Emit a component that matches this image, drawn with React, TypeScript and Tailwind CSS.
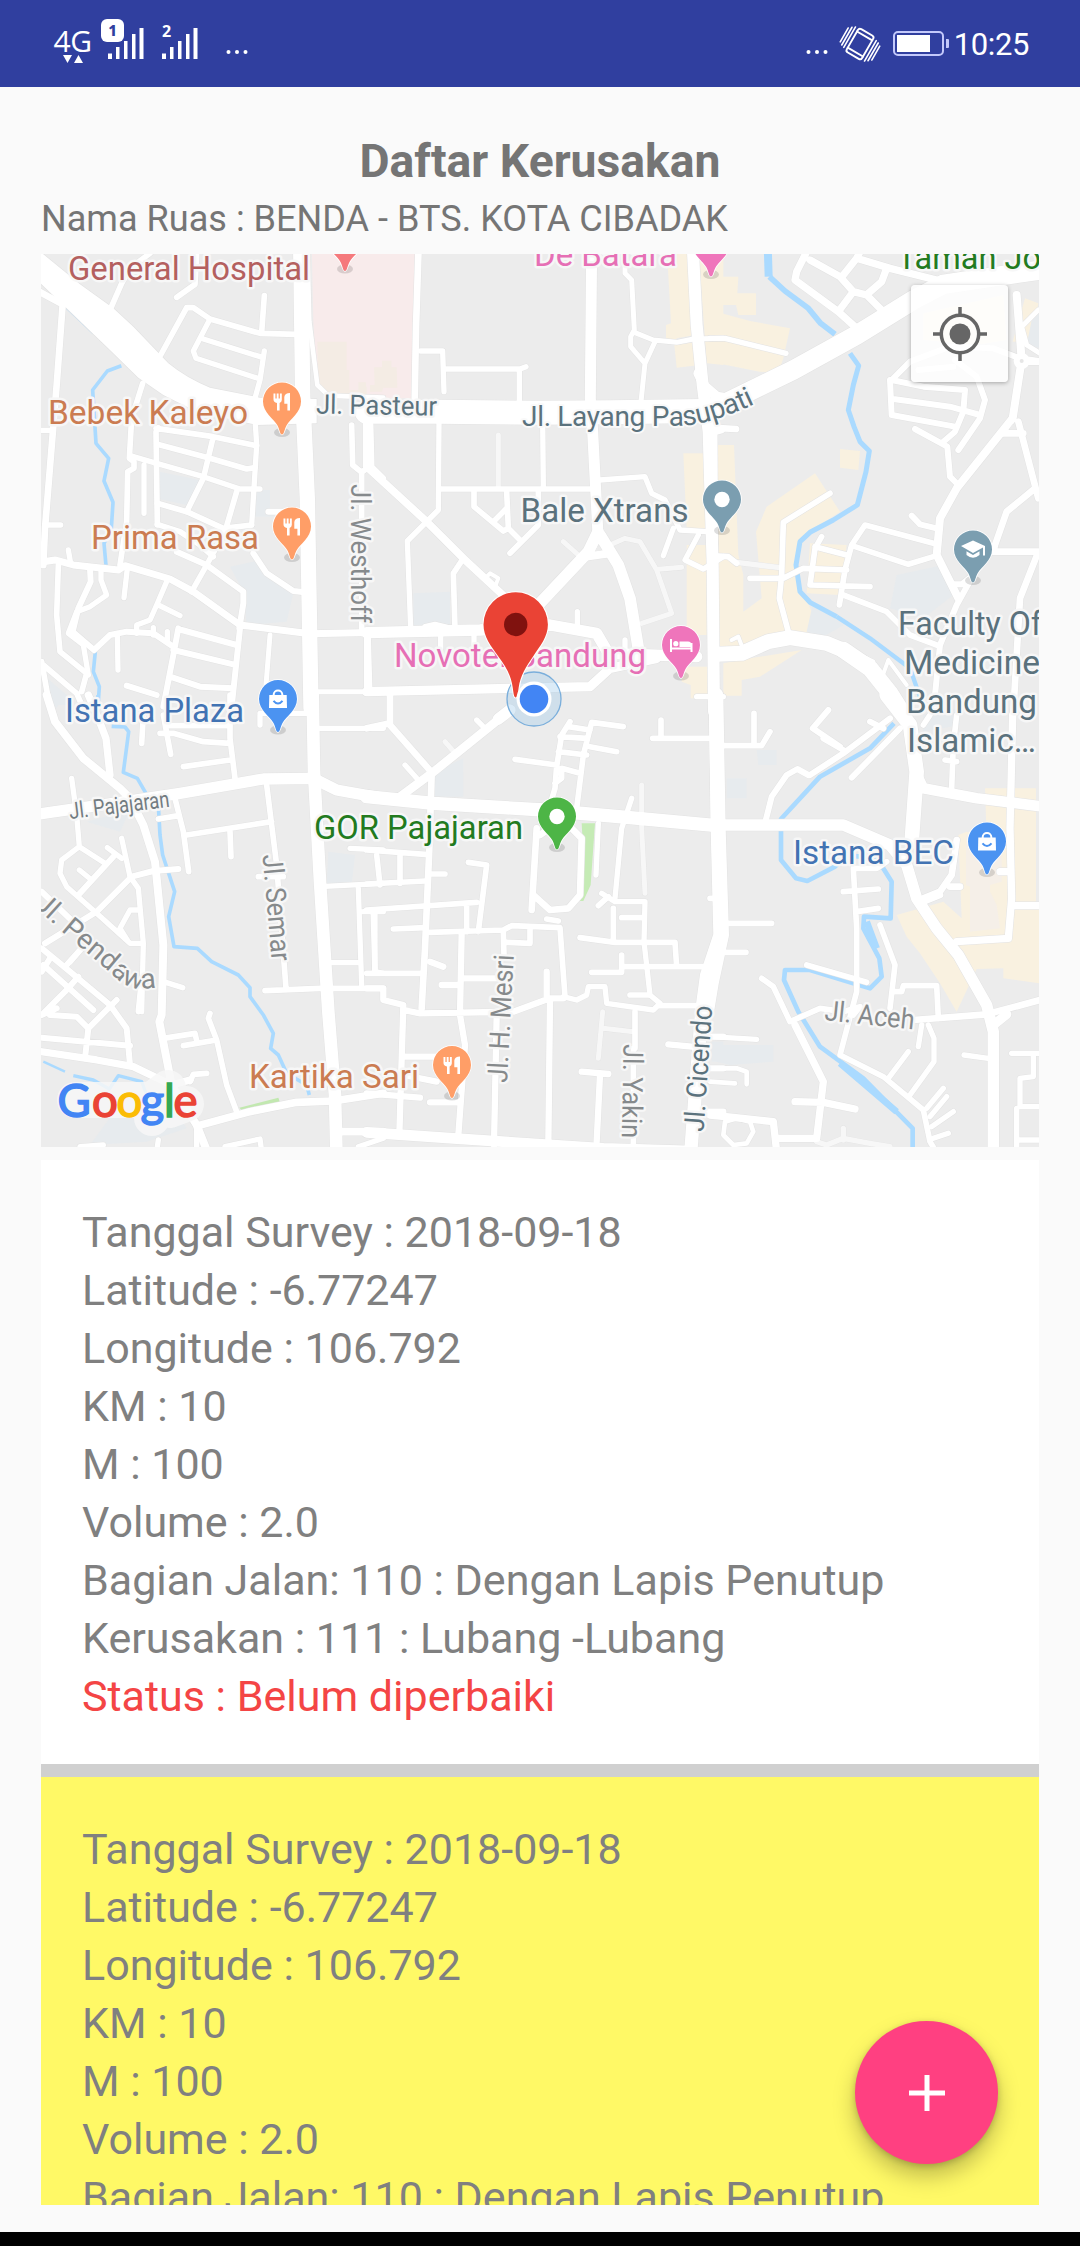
import React from "react";

type Road = [number, string];
type Tile = {
  x: number;
  y: number;
  areas: [string, string][];
  water: Road[];
  roads: Road[];
  faint?: Road[];
};

const SAND = "#f9f1e0";
const PALE = "#e7ebee";
const PINK = "#f8ebeb";

// Map geometry, split in tiles whose units are a third of a pixel.
const TILES: Tile[] = [
  {
    x: 30,
    y: 245,
    areas: [
      [PINK, "M845 0H1060V460H900L862 420L850 230Z"],
      ["#f4ece4", "M862 290H950V375H958V435H985V412H1008V425H1035V368H1060V450H900L864 415Z"],
      [PALE, "M388 680L510 705L470 780L388 762Z"],
      [PALE, "M600 965L690 945L740 1010L790 1045L770 1130L650 1140L640 1040Z"],
      [PALE, "M680 735H720V790L735 815H668Z"],
      [PALE, "M40 1290L110 1350L130 1380H50Z"],
    ],
    water: [
      [5, "M108 188L190 266"],
      [11, "M274 362L232 378L188 435L198 595L236 640L222 708L249 772L244 850L222 895L228 962"],
      [11, "M196 1220L190 1280L208 1325L204 1385"],
    ],
    roads: [
      [46, "M812 0L818 450L832 760L843 1390"],
      [14, "M832 0L838 230L862 420L895 452L1060 458"],
      [20, "M0 125L98 178L80 420L45 850L40 960"],
      [16, "M30 556H60M45 840H92M115 915L122 955"],
      [17, "M240 195L275 115L300 70L360 25"],
      [17, "M440 157L495 118L500 25"],
      [17, "M392 330L470 188L490 188L540 222L690 265L800 268M703 152L695 262"],
      [16, "M540 222L490 318L498 340L690 402M520 282L690 335M703 318L690 405L672 470L680 600L665 840"],
      [17, "M338 415L305 520L298 640L312 650L312 670L293 680L290 830L270 960"],
      [16, "M300 632L380 655L520 695L630 732H690M342 660V805"],
      [17, "M385 548L378 560L382 840M378 550L550 575L680 602M382 598L540 640L650 672L675 668M550 575L520 700L470 800"],
      [17, "M382 775L470 800L580 850L665 840M382 838L450 860L510 900L550 935M620 740L585 860L530 960L485 1040"],
      [18, "M440 920L530 960L640 1040L640 1075L628 1150M670 925L710 985L790 1038L825 1042M715 800H760"],
      [21, "M40 950L75 945L130 960L265 975L285 962L420 1002L490 1040L630 1140L840 1166L1060 1162"],
      [17, "M85 960L80 1110L90 1220L170 1285L155 1340M40 1260L140 1345L160 1390M35 1250L60 1390"],
      [18, "M180 970L182 1010L145 1090L128 1160L192 1215L240 1170L290 1160L370 1165L430 1205"],
      [16, "M213 970V1005L230 1050L180 1085L140 1100L115 1165L160 1200L175 1290"],
      [16, "M292 970L282 1058M410 1010L380 1080L360 1125L320 1140V1165M385 1080L450 1112M262 1165L264 1275M370 1148V1170M412 1160V1185"],
      [18, "M445 1150L430 1230L400 1385M455 1155L620 1200M430 1215L610 1258M420 1295L510 1325L610 1330M630 1150L605 1385M290 1322L380 1350"],
      [15, "M720 1170L708 1320M1015 1165L1020 1340M865 1340H1060"],
      [17, "M965 540L968 660L995 682L1025 660L1022 540M995 680V1165M1025 665L1060 700"],
    ],
  },
  {
    x: 370,
    y: 245,
    areas: [
      [PINK, "M-10 0H140L128 460H-10Z"],
      ["#f4ece4", "M12 367H36V347H64V367H80L82 428H40L36 440H0V420H14Z"],
      [SAND, "M890 0H960L975 270L920 280L915 300L985 290L990 360L920 368L912 290L888 280V240L903 235Z"],
      [SAND, "M985 0H1060V360L1010 355Z"],
      [SAND, "M940 625H1000L1010 860L950 850Z"],
      [SAND, "M1035 600H1060V930H1040Z"],
      [SAND, "M950 900H1010V1170H950Z"],
      [PALE, "M130 1045L240 1040V1145L130 1150Z"],
      [SAND, "M935 1265H1015V1360H962V1320L935 1310Z"],
    ],
    water: [],
    roads: [
      [72, "M-10 500H200L500 503L720 502L1000 498"],
      [20, "M146 0L138 250L134 470"],
      [33, "M665 0L661 460L668 560L684 870"],
      [36, "M968 0L980 240L998 420L1016 560L1020 700L1028 960L1032 1400"],
      [15, "M765 60V85L785 105L793 255L782 275V305L825 355L812 480M793 262L850 285L920 292L970 282L1060 280M855 290L825 355"],
      [16, "M152 318H218L222 440M230 372H450L468 365M448 372V470"],
      [16, "M518 520L520 730M207 535L205 795L112 888L122 1150M215 732H660"],
      [17, "M312 740V785L400 858L415 850L410 740M370 830L410 790M415 850L450 885M420 925L505 840V740"],
      [23, "M-10 530V665L170 830L280 940L420 1070"],
      [17, "M280 940L250 985L255 1150"],
      [12, "M345 1000L360 985L385 1000L375 1025"],
      [35, "M684 860L655 920L500 1085M690 870L745 960L780 1060L805 1210"],
      [24, "M650 935L720 925"],
      [16, "M690 705L825 695L845 745L885 765L930 855L1010 860M910 850L880 932M985 870L945 945L1000 972L1060 935"],
      [34, "M-10 1163L330 1155L540 1140L680 1165L715 1225L980 1235"],
      [16, "M165 1145L195 1138L235 1148M212 1175V1210M312 1170V1200M622 1100V1140M765 1185V1210"],
      [28, "M-10 1340L420 1330L660 1325L720 1270L860 1240"],
      [16, "M60 1345V1400M980 1355H1060M-10 1180V1345"],
      [30, "M985 385L1005 425L1040 455L1060 458"],
    ],
    faint: [
      [15, "M385 570V725M580 890L625 930M720 900L765 880L810 890L860 975L905 1105L815 1135M865 973L935 967"],
    ],
  },
  {
    x: 710,
    y: 245,
    areas: [
      [SAND, "M0 95H85L82 145H138V210H85L78 180H35V205L120 228L240 250L220 340L205 385L150 380L0 350Z"],
      [SAND, "M15 600H72L85 930L100 990V1100L155 1060L138 860L170 785L315 685L390 800L290 865L260 940L270 1020L310 1110L300 1165L100 1210L28 1210Z"],
      [SAND, "M390 612L450 618L445 675L390 668Z"],
      [SAND, "M300 895L410 900L390 1050L290 1045Z"],
      [SAND, "M40 1255L120 1240L275 1215L150 1295L95 1305V1352H40Z"],
      [SAND, "M640 205L880 150L890 285L800 300L700 290L640 285Z"],
      [SAND, "M945 160L985 175L965 290H908Z"],
      [PALE, "M970 200H990V310L950 300Z"],
      [PALE, "M560 990L700 960L730 1050L640 1120L540 1090Z"],
      [PALE, "M310 1070L420 1130L330 1180L290 1160Z"],
    ],
    water: [
      [24, "M173 0L176 95"],
      [17, "M178 95L225 138L295 190L332 235L375 268"],
      [15, "M420 325L446 362L430 420L415 495L432 545L450 590L478 618L468 680L442 780L370 825L300 862L270 890L258 960L270 1040L300 1072L380 1115"],
      [13, "M380 1115L480 1180L600 1270L640 1385"],
    ],
    roads: [
      [58, "M0 490L35 480L250 375L440 270L610 165L700 118L820 100L1060 65"],
      [20, "M35 555L18 560M0 548L78 552"],
      [22, "M435 245L385 200L255 105L260 80L300 0M385 200L430 140L470 150L515 195M300 45L390 95L430 140M400 90L440 40L450 20M440 40L540 70L680 105M530 70L515 110L475 145"],
      [16, "M0 280L45 280L228 325"],
      [17, "M360 745L220 832L215 990L208 1060L235 1160M120 1000H220L280 970L410 975M335 875L315 910L300 1020L480 1025M315 905L410 930M388 1080L405 975L425 900L465 840L670 895M435 905L595 958L670 935M400 1050L530 1100L600 1170L680 1200"],
      [17, "M0 932L55 935L80 955"],
      [45, "M20 1228L95 1225L175 1190L240 1178L350 1195L410 1220"],
      [50, "M400 1215L480 1270L540 1345L575 1400"],
      [12, "M65 1185L85 1175L100 1215M450 1230L490 1250M515 1300L535 1245L590 1320"],
      [18, "M545 405L600 350L720 305L850 310L930 340L1000 350M540 405L545 510L735 545M545 405L640 425L765 435L760 500L735 560L700 590M550 462L720 485L810 510M615 552L712 605L720 695L745 720M735 345L800 395L825 465L810 520L745 615M625 375L730 365"],
      [24, "M920 150L935 345L908 520L740 730L690 820L680 930L745 1060"],
      [20, "M935 350H1000M925 530L985 760M875 565H940M975 730L890 800L855 900L850 920H1000M985 920L930 1060L910 1400"],
      [18, "M605 812L630 838L680 850M725 1018H755L790 990L740 1080L690 1200L670 1400"],
      [15, "M985 195L935 245L950 300L990 325"],
      [17, "M14 570L18 1380"],
    ],
    faint: [[16, "M80 952L210 968"]],
  },
  {
    x: 30,
    y: 695,
    areas: [
      ["#c2e8b0", "M628 1238L745 1208L750 1222L635 1246Z"],
      [PALE, "M35 0H100L80 40ZM170 380L300 345L270 410Z"],
      [PALE, "M895 470L975 480L965 570H890Z"],
      [PALE, "M290 1200L420 1220L470 1300L350 1340L180 1350Z"],
    ],
    water: [
      [11, "M204 0L205 35M245 94L285 96L296 110L280 232L322 250L348 295L385 330L390 420L398 480L434 590L416 665L432 755L502 760L545 800L625 840L660 878V905L700 960L730 1015L722 1060L745 1080L770 1135L830 1170L838 1200"],
      [7, "M40 1100L105 1130"],
      [10, "M130 1142L190 1155L238 1182L265 1142L335 1160L350 1200L375 1225"],
    ],
    roads: [
      [34, "M0 362L60 352L250 325L450 295L700 252L850 250L920 285L1060 310"],
      [38, "M848 0L852 230L870 560L895 950L915 1200L920 1400"],
      [24, "M50 0L75 80L160 190L270 280L300 310L340 390L375 500L400 750L395 960L388 980L425 1170L500 1290L540 1390"],
      [22, "M175 0L205 70L228 130L240 240"],
      [16, "M125 250L140 360L148 455L95 495L90 535L110 575L200 655L300 745H335M335 950L340 745L325 580L300 545L275 430M148 455L225 505M232 458L275 490M148 525L185 555M325 645H300L270 700L295 740"],
      [18, "M145 600L250 485M120 800L155 760L110 810M45 745L200 650L305 545L370 528L445 522M35 590L150 700"],
      [18, "M35 760L120 830L240 930L290 1000L300 1110M35 830L60 790M40 810L190 945M35 960L105 890L145 845M35 960L80 940M60 960L140 965L175 1000L165 1090M175 1000L260 915M35 1028L300 1052"],
      [22, "M0 1065L200 1095L310 1115L425 1170L480 1155"],
      [17, "M325 950L335 850M400 860L458 878M340 60L335 145M400 60L422 178M390 115L430 115L520 140L600 145M460 215L600 195M410 92H600M600 0V130L615 250M385 372L445 362M435 310L460 410L476 530M470 420L725 380M600 410L603 485M710 270L740 510L768 880M685 545H760M705 887L870 880L1060 880"],
      [17, "M400 1030L495 1015L502 1045M460 1052L560 1035M540 955L535 970L560 1035L590 1170L620 1250M480 1160L490 1138L530 1135"],
      [23, "M505 1292L660 1250L800 1222L910 1218L1060 1195M935 1310H1060"],
      [16, "M500 1290V1400M690 60V90M690 55H840M870 100H1060M870 575L1060 565M985 580L995 870M900 803H985M1000 650H1060M1035 660V830L1060 835M960 460L1060 465M150 1355L220 1350M385 1335L380 1370M585 1355L690 1332L695 1370M985 1355L1060 1330"],
    ],
  },
  {
    x: 370,
    y: 695,
    areas: [
      [PALE, "M195 230L280 190V305H195Z"],
      ["#c5ebb5", "M635 385H675L662 570L640 618H625L638 440Z"],
      [PALE, "M1025 1040H1060V1100H1025Z"],
    ],
    water: [],
    roads: [
      [40, "M-10 305L190 325L520 345L780 368L1040 392"],
      [40, "M1036 0L1042 400L1050 720L1010 840L995 950L960 1400"],
      [26, "M90 305L185 235L400 62"],
      [34, "M385 72L420 45"],
      [20, "M60 0V90L185 232M185 235L178 460L165 760L155 940M-10 100L60 85"],
      [16, "M320 75L345 100M105 210L145 255"],
      [17, "M435 193L560 210L555 280L540 330M560 215L575 120L600 80M555 265L575 250V220L630 235M570 125L650 130M565 170L650 180M595 95L660 105M620 340L640 180L665 82L760 95M660 155L740 170"],
      [20, "M500 400L485 645M490 600L540 645L595 640L630 600L635 430L600 395M510 420L560 385"],
      [16, "M685 385L678 540M785 310L755 400L735 610M695 595L735 620H825L822 740L840 900L870 925L850 945L710 925L705 875H655L650 900L620 915L580 905"],
      [17, "M685 632L715 605M730 640V740M630 728L735 742H915L920 815M755 668H820M665 832H755V780M755 815L1005 815M780 900H835M870 932H1000M795 950V1060M790 1060V1400M848 130H1040M873 75V125M1020 610H1060"],
      [17, "M-10 465L165 478M20 480L30 570M90 480V565M-10 567L165 558M180 537H225M295 502L350 510L325 710M-10 645L320 622M70 702L165 698M180 712L400 705L425 692L570 698L585 905M530 672L565 678M10 655L15 830M-10 835H155M290 625V710M400 710L402 780M480 700V745L410 742"],
      [19, "M275 715L270 960L285 1050L265 1320M180 800L220 815M215 870H265M275 850H380M-10 880H40V915L100 930L88 1320M100 945L150 955L430 950L540 910H580M530 830V905M540 915L535 1350M380 960L372 1350M100 1085H200M100 1140L200 1160M-10 1195L150 1208M180 1222H265M635 1130L715 1137M690 1140L680 1340M895 1048L965 1055M1000 1025H1060M1010 1120H1060M1010 1250H1060"],
      [32, "M-10 1312L250 1330L470 1345L700 1360L970 1368"],
    ],
    faint: [
      [15, "M225 140L260 180M815 270V400L825 595M698 950L685 1090M700 1000L790 1010"],
    ],
  },
  {
    x: 710,
    y: 695,
    areas: [
      [SAND, "M825 280H978V620H915V640H990V865L880 850V820L800 822L740 950L690 865L630 775L590 725L560 660L700 620L755 670L745 420L770 410L830 430Z"],
      ["#f5efe8", "M768 420H875V560L840 570V590L860 630L870 700L780 710V575L768 570Z"],
      [PALE, "M20 1050H190V1100L60 1110L20 1100ZM140 165H200V210H145ZM50 250H110V310H50Z"],
      [PALE, "M640 60L740 40L750 90L640 110Z"],
    ],
    water: [
      [14, "M552 85L480 160L330 245L213 372V495L258 550L292 558L375 515L410 482L500 488L545 560L542 670L462 665L460 700L508 790L515 845L480 880L430 865L300 825H225L222 855L265 950L330 1055L460 1150L608 1300V1400"],
      [20, "M470 680L500 760M390 1105L490 1190L560 1250"],
    ],
    roads: [
      [34, "M0 390H400L540 450L590 510L620 610L680 700L745 780L830 930L850 1010V1400"],
      [44, "M18 0L25 400L35 720L5 860L-10 950"],
      [44, "M530 0L600 90L620 230L605 440"],
      [32, "M620 240L640 280L800 310L1000 335"],
      [18, "M300 240L400 175L540 70M425 248L570 100M295 240L262 222L230 240L185 305L165 385M390 155L308 100L355 45M400 165L340 130M480 80L520 100"],
      [17, "M132 55V150M40 152H155L180 110M740 60L730 150L725 280M640 90L660 60M705 195L740 200"],
      [22, "M908 60L900 400L905 610L895 730L740 740M870 530H900M910 632H1000"],
      [17, "M430 520H500L530 500M430 520L440 700V890L390 1080L520 1145L640 1245L660 1340L690 1390M400 590L505 582M440 650L505 640M510 690L555 810L540 940M550 890H575L580 872H680L685 970"],
      [17, "M290 810L470 862M50 685H185M30 772H108M155 850L190 875L240 980L330 940L400 950L450 935L430 960"],
      [20, "M610 975L830 958L990 915M640 610L690 590L725 540L740 435M640 620L690 600M720 575H750"],
      [22, "M255 990L340 1160L320 1330H200M255 1220L340 1222L435 1242M0 1260L190 1280L200 1370"],
      [14, "M45 1280L80 1270L120 1280L130 1310L110 1345L70 1350L40 1320ZM0 1120H80L110 1130V1168M0 1160L75 1165"],
      [16, "M0 1025L140 1033M625 1055L635 990M595 1070L535 1150M655 990L672 1030V1100L600 1200M650 1240L700 1180M660 1265L710 1205M665 1295L730 1250M670 1330L715 1315M762 1080L835 1090M905 1075H1000M970 1080V1145L930 1150V1235H1000M920 1240V1400M925 1335H1000"],
      [28, "M850 990L890 958"],
    ],
    faint: [[16, "M320 1340L350 1350L400 1330L480 1345L540 1355M400 1300V1335"]],
  },
];

function RoadMap() {
  return (
    <>
      {TILES.map((t, i) => (
        <g key={"a" + i} transform={`translate(${t.x} ${t.y}) scale(0.33333)`}>
          {t.areas.map(([c, d], k) => (
            <path key={k} d={d} fill={c} />
          ))}
          {t.water.map(([w, d], k) => (
            <path key={k} d={d} fill="none" stroke="#aadaff" strokeWidth={w} strokeLinejoin="round" />
          ))}
        </g>
      ))}
      <g strokeLinecap="round" strokeLinejoin="round" fill="none">
        {["#e3e3e3", "#ffffff"].map((c, pass) => (
          <g key={c} stroke={c}>
            {TILES.map((t, i) => (
              <g key={i} transform={`translate(${t.x} ${t.y}) scale(0.33333)`}>
                {i === 0 && (
                  <path
                    d="M0 -5L150 118L250 190L310 245L415 355Q470 400 540 428L690 458L860 462V535L680 540L500 500L400 450L325 398L240 315L100 180L0 85Z"
                    fill={c}
                    strokeWidth={pass ? 0 : 4}
                  />
                )}
                {(t.faint ?? []).map(([w, d], k) => (
                  <path key={"f" + k} d={d} strokeWidth={pass ? w : w + 2} stroke={pass ? "#f7f7f7" : c} />
                ))}
                {t.roads.map(([w, d], k) => (
                  <path key={k} d={d} strokeWidth={pass ? w : w + 3} />
                ))}
              </g>
            ))}
          </g>
        ))}
      </g>
      <g transform="translate(710 245) scale(0.33333)">
        <circle cx="935" cy="348" r="24" fill="#fff" />
        <circle cx="935" cy="348" r="6" fill="#e6e6e6" />
        <path d="M908 537L920 553H896Z" fill="#ececec" />
      </g>
      <path d="M598 546l3 5h-6z" fill="#ececec" />
    </>
  );
}

type LabelProps = {
  x: number;
  y: number;
  w: number;
  color: string;
  size?: number;
  rotate?: number;
  children: string;
};

function Label({ x, y, w, color, size = 33, rotate = 0, children }: LabelProps) {
  return (
    <text
      transform={`translate(${x} ${y}) rotate(${rotate})`}
      textLength={w}
      lengthAdjust="spacingAndGlyphs"
      fontSize={size}
      fill={color}
      stroke="#f7f7f7"
      strokeWidth="5"
      strokeLinejoin="round"
      paintOrder="stroke"
    >
      {children}
    </text>
  );
}

function Pin({ x, y, color, children }: { x: number; y: number; color: string; children?: React.ReactNode }) {
  return (
    <g transform={`translate(${x} ${y})`}>
      <ellipse cx="0" cy="31" rx="8" ry="4.5" fill="#000" opacity="0.13" />
      <path
        d="M0 33C-2 33 -2.4 28 -4.5 24C-8 17.5 -19 11 -19 0A19 19 0 0 1 19 0C19 11 8 17.5 4.5 24C2.4 28 2 33 0 33Z"
        fill={color}
        stroke="#fff"
        strokeWidth="1.6"
        paintOrder="stroke"
      />
      {children}
    </g>
  );
}

const Fork = () => (
  <g fill="#fff">
    <path d="M-8.500 -8h1.900v5h1.300v-5h1.900v5h1.300v-5h1.900v6.500q0 2.200-2.200 2.900V9h-2.600V1.400q-3.500-.8-3.500-3.400z" />
    <path d="M8 -8.500V9H5.400V2.200H2.300V-4.500Q2.800-8.300 8-8.500z" />
  </g>
);

const Bag = () => (
  <g>
    <path d="M-8.700 -4H8.700L9 9H-9Z" fill="#fff" />
    <path d="M-4.300 -3V-4.500a4.300 4 0 0 1 8.600 0V-3" fill="none" stroke="#fff" strokeWidth="2" />
    <path d="M-4.500 1.800q4.500 5.400 9 0" fill="none" stroke="#4b93f1" strokeWidth="2" />
  </g>
);

function SurveyMap() {
  const slate = "#5b727d";
  const grey = "#868a8c";
  const orange = "#cb7c52";
  const pink = "#e66fb5";
  const green = "#237b1f";
  const blue = "#4273b3";
  return (
    <div className="relative mt-3 h-[893px] w-[998px] overflow-hidden bg-[#ececec]">
      <svg className="block h-full w-full" viewBox="41 254 998 893" fontFamily="Roboto, sans-serif">
        <defs>
          <path id="layang" d="M522 426L680 426Q715 424 765 399" />
          <path id="pendawa" d="M33 905L66 935L112 974Q126 989 142 989L174 986" />
        </defs>
        <RoadMap />

        <Pin x={345} y={238} color="#f5797c" />
        <Pin x={711} y={243.500} color="#ef75bb" />

        <Label x={68} y={279.500} w={242} color="#b4605f">General Hospital</Label>
        <Label x={534} y={266} w={143} color={pink}>De Batara</Label>
        <Label x={897} y={269} w={144} color={green}>Taman Jo</Label>
        <Label x={48} y={424} w={200} color={orange}>Bebek Kaleyo</Label>
        <Label x={91} y={548.500} w={168} color={orange}>Prima Rasa</Label>
        <Label x={316} y={413.500} w={121} color={slate} size={27} rotate={1}>Jl. Pasteur</Label>
        <Label x={351} y={484} w={139} color={grey} size={28} rotate={90}>Jl. Westhoff</Label>
        <Label x={520.500} y={522} w={168} color={slate}>Bale Xtrans</Label>
        <text fontSize="28" fill={slate} stroke="#f9f9f9" strokeWidth="4" paintOrder="stroke" strokeLinejoin="round">
          <textPath href="#layang" textLength="237">Jl. Layang Pasupati</textPath>
        </text>
        <Label x={394} y={667} w={252} color={pink}>Novotel Bandung</Label>
        <Label x={898} y={634.500} w={144} color={slate}>Faculty Of</Label>
        <Label x={904} y={674} w={136} color={slate}>Medicine</Label>
        <Label x={906} y={713} w={131} color={slate}>Bandung</Label>
        <Label x={907} y={751.500} w={129} color={slate}>Islamic…</Label>
        <Label x={65} y={722} w={179} color={blue}>Istana Plaza</Label>
        <Label x={70} y={819} w={101} color="#737c81" size={23} rotate={-7}>Jl. Pajajaran</Label>
        <Label x={314} y={839} w={209} color={green}>GOR Pajajaran</Label>
        <Label x={262.500} y={855} w={107} color={grey} size={28} rotate={85}>Jl. Semar</Label>
        <text fontSize="28" fill={grey} stroke="#f7f7f7" strokeWidth="4" paintOrder="stroke" strokeLinejoin="round">
          <textPath href="#pendawa" textLength="154">Jl. Pendawa</textPath>
        </text>
        <Label x={249} y={1087.500} w={170} color={orange}>Kartika Sari</Label>
        <Label x={507} y={1083} w={128} color={grey} size={28} rotate={-87}>Jl. H. Mesri</Label>
        <Label x={623.500} y={1044} w={94} color={grey} size={28} rotate={91}>Jl. Yakin</Label>
        <Label x={703.500} y={1132} w={126} color={slate} size={28} rotate={-86}>Jl. Cicendo</Label>
        <Label x={824} y={1020} w={90} color={grey} size={28} rotate={6}>Jl. Aceh</Label>
        <Label x={793} y={864} w={161} color={blue}>Istana BEC</Label>

        <Pin x={282} y={401.500} color="#ff9e67"><Fork /></Pin>
        <Pin x={292} y={526.500} color="#ff9e67"><Fork /></Pin>
        <Pin x={452} y={1065} color="#ff9e67"><Fork /></Pin>
        <Pin x={722} y={499.500} color="#7b9eb0"><circle r="7.700" fill="#fff" /></Pin>
        <Pin x={557} y={816.500} color="#4db546"><circle r="7.700" fill="#fff" /></Pin>
        <Pin x={278} y={699} color="#4b93f1"><Bag /></Pin>
        <Pin x={987} y={841.500} color="#4b93f1"><Bag /></Pin>
        <Pin x={973} y={549.500} color="#7b9eb0">
          <path d="M-12 -3.500L0 -9L12 -3.500V6H10V-2L0 3.500Z" fill="#fff" />
          <path d="M-6.500 1.800V5.500Q0 11 6.500 5.500V1.800L0 5.500Z" fill="#fff" />
        </Pin>
        <Pin x={681} y={645} color="#ef75bb">
          <path d="M-10 -6V7M10.500 -2V7M-10 3.500H10.500" stroke="#fff" strokeWidth="2" />
          <path d="M-1.500 -3.500H7Q10.500 -3.500 10.500 0V2H-1.500Z" fill="#fff" />
          <circle cx="-5.200" cy="-1.300" r="2.600" fill="#fff" />
        </Pin>

        <circle cx="534" cy="699" r="27" fill="#a4cdec" fillOpacity="0.4" stroke="#7aaedb" strokeWidth="1.300" />
        <path
          d="M515.700 697.500C514 697.500 513.600 694 512.800 688C511 675 506 667 498 656C491 646 483.500 637 483.500 624.500A32.200 32.200 0 0 1 547.900 624.500C547.900 637 540 646 533.400 656C526 667 520.500 675 518.600 688C517.800 694 517.400 697.500 515.700 697.500Z"
          fill="#ea4335"
          stroke="#fff"
          strokeWidth="2"
          paintOrder="stroke"
        />
        <circle cx="515.700" cy="624.500" r="11.700" fill="#80120f" />
        <circle cx="534" cy="699" r="17.500" fill="#fff" />
        <circle cx="534" cy="699" r="14.300" fill="#4285f4" />

        <path d="M75 1100H106H129H152L168 1088L170 1110L186 1104M152 1108V1118" stroke="#f7f7f7" strokeOpacity="0.85" strokeWidth="36" strokeLinecap="round" strokeLinejoin="round" fill="none" />
        <text y="1117" x="57.500 92 116.500 140.500 164 173.500" fontFamily="Lato, sans-serif" fontSize="45.500" strokeWidth="1.500">
          <tspan fill="#4285f4" stroke="#4285f4">G</tspan>
          <tspan fill="#ea4335" stroke="#ea4335">o</tspan>
          <tspan fill="#fbbc05" stroke="#fbbc05">o</tspan>
          <tspan fill="#4285f4" stroke="#4285f4">g</tspan>
          <tspan fill="#34a853" stroke="#34a853">l</tspan>
          <tspan fill="#ea4335" stroke="#ea4335">e</tspan>
        </text>
      </svg>
      <button className="absolute top-[31px] right-[31px] flex size-[97px] items-center justify-center rounded-[4px] bg-white/85 shadow-[0_1px_4px_rgba(0,0,0,0.3)]">
        <svg className="size-[56px]" viewBox="-28 -28 56 56" fill="none" stroke="#666" strokeWidth="3.500">
          <circle r="18.700" />
          <circle r="10.500" fill="#666" stroke="none" />
          <path d="M0 -27V-19M0 27V19M-27 0H-19M27 0H19" />
        </svg>
      </button>
    </div>
  );
}

function Signal() {
  return (
    <svg className="h-[31px] w-[36px]" viewBox="0 0 36 31" fill="#fff">
      <rect x="0" y="25.500" width="4" height="5.500" />
      <rect x="8" y="19" width="3.500" height="12" />
      <rect x="16" y="13" width="3.500" height="18" />
      <rect x="24" y="6" width="3.500" height="25" />
      <rect x="31.500" y="0" width="4" height="31" />
    </svg>
  );
}

function Dots() {
  return (
    <svg className="h-[4px] w-[22px]" viewBox="0 0 22 4" fill="#fff">
      <circle cx="2.500" cy="2" r="2" />
      <circle cx="11" cy="2" r="2" />
      <circle cx="19.500" cy="2" r="2" />
    </svg>
  );
}

function StatusBar() {
  return (
    <header className="flex h-[87px] shrink-0 items-start justify-between bg-[#303f9f] pr-[51px] pl-[53px] text-white">
      <div className="flex items-start">
        <div className="flex w-[39px] flex-col items-center pt-[26px]">
          <span className="font-['Open_Sans',sans-serif] text-[30px] leading-[29px] tracking-[-0.5px]">4G</span>
          <svg className="h-[8px] w-[20px]" viewBox="0 0 20 8" fill="#fff">
            <path d="M0 0H9L4.500 8ZM11 8H20L15.500 0Z" />
          </svg>
        </div>
        <div className="relative ml-[16px] pt-[28px]">
          <Signal />
          <span className="absolute top-[19px] left-[-7px] flex size-[23px] items-center justify-center rounded-[6px] bg-white font-['Noto_Sans','DejaVu_Sans',sans-serif] text-[15px] font-extrabold text-[#303f9f]">
            1
          </span>
        </div>
        <div className="relative ml-[18px] pt-[28px]">
          <Signal />
          <span className="absolute top-[21px] left-0 font-['Open_Sans',sans-serif] text-[16px] leading-[20px] font-bold">2</span>
        </div>
        <div className="ml-[28px] flex pt-[50px]">
          <Dots />
        </div>
      </div>
      <div className="flex items-start">
        <div className="flex pt-[50px]">
          <Dots />
        </div>
        <svg className="mt-[23px] ml-[11px] size-[42px]" viewBox="-21 -21 42 42" fill="none" stroke="#fff" strokeWidth="1.900" strokeLinecap="round">
          <g transform="rotate(30)">
            <rect x="-8.800" y="-13.500" width="17.600" height="27" rx="2.500" />
            <path d="M-8.800 -9.300H8.800M-8.800 9.300H8.800" />
            <path strokeWidth="1.600" d="M-12.400 -12.500V11M-15.300 -10.500V10M-18.200 -8V8M12.400 12.500V-11M15.300 10.500V-10M18.200 8V-8" />
          </g>
        </svg>
        <div className="mt-[31px] ml-[12px] flex items-center gap-[2px]">
          <div className="h-[25px] w-[51px] rounded-[5px] border-2 border-[#c3c9fb] p-[2px]">
            <div className="h-[17px] w-[33px] bg-white" />
          </div>
          <div className="h-[9px] w-[3px] rounded-r-[1px] bg-[#c3c9fb]" />
        </div>
        <span className="mt-[26px] ml-[5px] text-[31px] leading-[37px] tracking-[-0.4px]">10:25</span>
      </div>
    </header>
  );
}

const DETAILS = [
  "Tanggal Survey : 2018-09-18",
  "Latitude : -6.77247",
  "Longitude : 106.792",
  "KM : 10",
  "M : 100",
  "Volume : 2.0",
  "Bagian Jalan: 110 : Dengan Lapis Penutup",
  "Kerusakan : 111 : Lubang -Lubang",
];

export default function App() {
  return (
    <div className="relative flex h-[2246px] w-[1080px] flex-col overflow-hidden bg-[#fafafa] font-[Roboto,sans-serif] text-[#757575]">
      <StatusBar />
      <main className="flex flex-1 flex-col px-[41px]">
        <h1 className="mt-[44px] text-center text-[46.300px] leading-[60px] font-bold">Daftar Kerusakan</h1>
        <p className="mt-[4px] -mb-px text-[36.100px] leading-[48px]">Nama Ruas : BENDA - BTS. KOTA CIBADAK</p>
        <SurveyMap />
        <section className="mt-[13px] flex h-[1045px] flex-col overflow-hidden text-[43px] leading-[58px] text-[#808080]">
          <article className="h-[604px] shrink-0 bg-white px-[41px] pt-[43px]">
            {DETAILS.map((line) => (
              <p key={line} className="whitespace-nowrap">{line}</p>
            ))}
            <p className="text-[#f44545]">Status : Belum diperbaiki</p>
          </article>
          <div className="h-[13px] shrink-0 bg-[#d0d0d0]" />
          <article className="h-[604px] shrink-0 bg-[#fff966] px-[41px] pt-[43px]">
            {DETAILS.map((line) => (
              <p key={line} className="whitespace-nowrap">{line}</p>
            ))}
          </article>
        </section>
      </main>
      <footer className="h-[14px] shrink-0 bg-black" />
      <button className="absolute right-[82px] bottom-[82px] flex size-[143px] items-center justify-center rounded-full bg-[#ff4081] shadow-[0_12px_22px_rgba(0,0,0,0.25),0_2px_6px_rgba(0,0,0,0.18)]">
        <svg className="size-[36px]" viewBox="0 0 36 36" stroke="#fff" strokeWidth="5">
          <path d="M18 0V36M0 18H36" />
        </svg>
      </button>
    </div>
  );
}
